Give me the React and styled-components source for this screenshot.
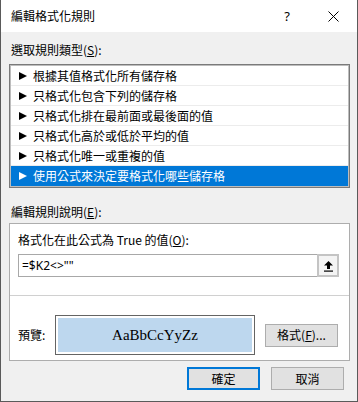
import React from "react"
import styled, { createGlobalStyle } from "styled-components"

const GlobalStyle = createGlobalStyle`
  html, body {
    margin: 0;
    padding: 0;
    background: #f0f0f0;
  }
  * {
    box-sizing: border-box;
  }
`

const rules = [
  "根據其值格式化所有儲存格",
  "只格式化包含下列的儲存格",
  "只格式化排在最前面或最後面的值",
  "只格式化高於或低於平均的值",
  "只格式化唯一或重複的值",
  "使用公式來決定要格式化哪些儲存格",
]

const UpArrowIcon = () => (
  <svg width="11" height="12" viewBox="0 0 11 12">
    <path d="M5.5 1 L10 5.5 L7 5.5 L7 9 L4 9 L4 5.5 L1 5.5 Z" fill="#000" />
    <rect x="1" y="10.5" width="9" height="1.2" fill="#000" />
  </svg>
)

const CloseIcon = () => (
  <svg width="11" height="11" viewBox="0 0 11 11">
    <path d="M0.5 0.5 L10.5 10.5 M10.5 0.5 L0.5 10.5" stroke="#000" strokeWidth="1" />
  </svg>
)

const App = () => {
  return (
    <>
      <GlobalStyle />
      <Dialog>
        <TitleBar>
          <Title>編輯格式化規則</Title>
          <TitleButtons>
            <HelpMark>?</HelpMark>
            <CloseIcon />
          </TitleButtons>
        </TitleBar>
        <Body>
          <SectionLabel $top={10}>
            選取規則類型(<u>S</u>):
          </SectionLabel>
          <RuleList>
            {rules.map((r, i) => (
              <RuleRow key={r} $selected={i === rules.length - 1}>
                <Arrow $selected={i === rules.length - 1} />
                {r}
              </RuleRow>
            ))}
          </RuleList>
          <SectionLabel $top={16}>
            編輯規則說明(<u>E</u>):
          </SectionLabel>
          <GroupBox>
            <FormulaPart>
              <FormulaLabel>
                格式化在此公式為 True 的值(<u>O</u>):
              </FormulaLabel>
              <FormulaInput>
                <FormulaText>=$K2&lt;&gt;""</FormulaText>
                <PickButton>
                  <UpArrowIcon />
                </PickButton>
              </FormulaInput>
            </FormulaPart>
            <PreviewPart>
              <PreviewLabel>預覽:</PreviewLabel>
              <PreviewBox>
                <PreviewInner>AaBbCcYyZz</PreviewInner>
              </PreviewBox>
              <Button $width={73}>
                格式(<u>F</u>)...
              </Button>
            </PreviewPart>
          </GroupBox>
          <Footer>
            <Button $primary $width={73}>確定</Button>
            <Button $width={73}>取消</Button>
          </Footer>
        </Body>
      </Dialog>
    </>
  )
}

const Dialog = styled.div`
  width: 358px;
  height: 402px;
  background: #f0f0f0;
  border-left: 1px solid #5a5a5a;
  border-right: 1px solid #5a5a5a;
  border-bottom: 1px solid #5a5a5a;
  font-family: "Noto Sans CJK TC", "Noto Sans", sans-serif;
  font-size: 12px;
  color: #000;
  display: flex;
  flex-direction: column;
`

const TitleBar = styled.div`
  height: 32px;
  background: #fff;
  display: flex;
  align-items: center;
  justify-content: space-between;
  padding: 0 18px 0 10px;
`

const Title = styled.div`
  font-size: 12px;
  line-height: 16px;
`

const TitleButtons = styled.div`
  display: flex;
  align-items: center;
  gap: 38px;
`

const HelpMark = styled.span`
  font-family: "Noto Sans", sans-serif;
  font-size: 13px;
  line-height: 16px;
`

const Body = styled.div`
  flex: 1;
  display: flex;
  flex-direction: column;
  padding: 0 7px 0 8px;
`

const SectionLabel = styled.div`
  margin-top: ${p => p.$top}px;
  line-height: 16px;
  padding-left: 2px;
`

const RuleList = styled.div`
  margin-top: 6px;
  height: 124px;
  background: #fff;
  border: 1px solid #7a7a7a;
  box-shadow: inset 0 0 0 1px #bdbdbd;
  padding: 1px;
  display: flex;
  flex-direction: column;
`

const RuleRow = styled.div`
  height: 20px;
  display: flex;
  align-items: center;
  padding-left: 8px;
  border-bottom: 1px solid ${p => (p.$selected ? "transparent" : "#ececec")};
  background: ${p => (p.$selected ? "#0078d7" : "transparent")};
  color: ${p => (p.$selected ? "#fff" : "#000")};
  line-height: 16px;
`

const Arrow = styled.span`
  width: 0;
  height: 0;
  border-top: 4.5px solid transparent;
  border-bottom: 4.5px solid transparent;
  border-left: 8px solid ${p => (p.$selected ? "#fff" : "#000")};
  margin-right: 6px;
`

const GroupBox = styled.div`
  margin-top: 3px;
  background: #fff;
  border: 1px solid #adadad;
  display: flex;
  flex-direction: column;
`

const FormulaPart = styled.div`
  padding: 8px 10px 18px 8px;
  border-bottom: 1px solid #d0d0d0;
`

const FormulaLabel = styled.div`
  line-height: 16px;
  margin-bottom: 6px;
`

const FormulaInput = styled.div`
  height: 23px;
  border: 1px solid #a8a8a8;
  display: flex;
  align-items: stretch;
`

const FormulaText = styled.div`
  flex: 1;
  display: flex;
  align-items: center;
  padding-left: 3px;
  font-family: "Noto Sans", sans-serif;
  font-size: 12px;
`

const PickButton = styled.div`
  width: 22px;
  margin: -1px -1px -1px 0;
  border: 2px solid #c4c4c4;
  background: #f4f4f4;
  display: flex;
  align-items: center;
  justify-content: center;
`

const PreviewPart = styled.div`
  display: flex;
  align-items: center;
  padding: 19px 10px 5px 8px;
`

const PreviewLabel = styled.div`
  width: 37px;
  line-height: 16px;
`

const PreviewBox = styled.div`
  width: 200px;
  height: 40px;
  border: 1px solid #646464;
  padding: 2px;
  background: #fff;
  margin-right: 10px;
`

const PreviewInner = styled.div`
  height: 100%;
  background: #bdd7ee;
  display: flex;
  align-items: center;
  justify-content: center;
  font-family: "Liberation Serif", serif;
  font-size: 15px;
`

const Button = styled.div`
  width: ${p => p.$width}px;
  height: 23px;
  background: #e1e1e1;
  border: ${p => (p.$primary ? "2px solid #0078d7" : "1px solid #adadad")};
  display: flex;
  align-items: center;
  justify-content: center;
  line-height: 16px;
`

const Footer = styled.div`
  margin-top: 6px;
  display: flex;
  justify-content: flex-end;
  gap: 11px;
  padding-right: 6px;
`

export default App
